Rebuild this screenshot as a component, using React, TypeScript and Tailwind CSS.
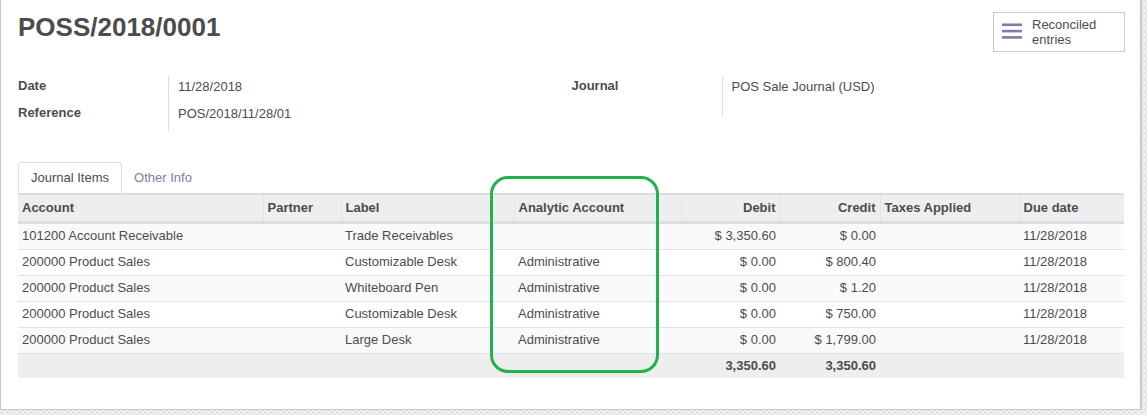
import React from 'react';

type Line = {
  account: string;
  label: string;
  analytic: string;
  debit: string;
  credit: string;
  due: string;
};

const lines: Line[] = [
  { account: '101200 Account Receivable', label: 'Trade Receivables', analytic: '', debit: '$ 3,350.60', credit: '$ 0.00', due: '11/28/2018' },
  { account: '200000 Product Sales', label: 'Customizable Desk', analytic: 'Administrative', debit: '$ 0.00', credit: '$ 800.40', due: '11/28/2018' },
  { account: '200000 Product Sales', label: 'Whiteboard Pen', analytic: 'Administrative', debit: '$ 0.00', credit: '$ 1.20', due: '11/28/2018' },
  { account: '200000 Product Sales', label: 'Customizable Desk', analytic: 'Administrative', debit: '$ 0.00', credit: '$ 750.00', due: '11/28/2018' },
  { account: '200000 Product Sales', label: 'Large Desk', analytic: 'Administrative', debit: '$ 0.00', credit: '$ 1,799.00', due: '11/28/2018' },
];

const BarsIcon = () => (
  <svg width="20" height="16" viewBox="0 0 20 16" className="shrink-0 mt-[6px]">
    <rect x="0" y="0.5" width="20" height="2.6" fill="#7c7bad" />
    <rect x="0" y="6.8" width="20" height="2.6" fill="#7c7bad" />
    <rect x="0" y="13.1" width="20" height="2.6" fill="#7c7bad" />
  </svg>
);

export default function App() {
  return (
    <div className="w-[1147px] h-[415px] overflow-hidden bg-[repeating-conic-gradient(#e4e4e4_0_25%,#f1f1f1_0_50%)] bg-[length:6px_6px] font-['Liberation_Sans',Arial,sans-serif] text-[13px] text-[#4c4c4c]">
      <div className="relative w-[1142px] h-[410px] bg-white border-l border-b border-r-2 border-[#c9c9cd] pl-[17px] pr-[15px] pt-[12px]">
        {/* Title + button */}
        <div className="flex justify-between items-start">
          <h1 className="text-[26px] leading-[30px] font-bold text-[#4c4c4c]">POSS/2018/0001</h1>
          <button className="w-[132px] h-[40px] border border-[#cccccc] bg-white flex items-start gap-[10px] pl-[8px] pt-[4px] text-left leading-[15px] text-[#4c4c4c]">
            <BarsIcon />
            <span>
              Reconciled
              <br />
              entries
            </span>
          </button>
        </div>

        {/* Fields */}
        <div className="grid grid-cols-2 mt-[24px]">
          <div className="flex">
            <div className="w-[150px] font-bold">
              <div className="h-[27px] leading-[20px]">Date</div>
              <div className="h-[28px] leading-[20px]">Reference</div>
            </div>
            <div className="border-l border-[#dddddd] pl-[9px]">
              <div className="h-[27px] leading-[20px] pt-px">11/28/2018</div>
              <div className="h-[28px] leading-[20px] pt-px">POS/2018/11/28/01</div>
            </div>
          </div>
          <div className="flex">
            <div className="w-[150px] font-bold leading-[20px]">Journal</div>
            <div className="border-l border-[#dddddd] pl-[9px] h-[39px] leading-[20px] pt-px">POS Sale Journal (USD)</div>
          </div>
        </div>

        {/* Tabs */}
        <div className="flex mt-[31px] h-[31px]">
          <div className="px-3 pt-[5px] border border-b-0 border-[#dddddd] rounded-t-[3px] bg-white leading-[20px]">Journal Items</div>
          <div className="px-3 pt-[6px] leading-[20px] text-[#7c7bad]">Other Info</div>
        </div>

        {/* Lines */}
        <table className="w-[1106px] table-fixed border-collapse">
          <colgroup>
            <col className="w-[245px]" />
            <col className="w-[78px]" />
            <col className="w-[173px]" />
            <col className="w-[167px]" />
            <col className="w-[99px]" />
            <col className="w-[100px]" />
            <col className="w-[139px]" />
            <col className="w-[105px]" />
          </colgroup>
          <thead>
            <tr className="bg-[#eeeeee] border-t-2 border-b-[3px] border-[#dcdde2] h-[28px] font-bold">
              <th className="px-1 text-left font-bold">Account</th>
              <th className="px-1 text-left font-bold border-l border-[#e3e3e3]">Partner</th>
              <th className="px-1 text-left font-bold border-l border-[#e3e3e3]">Label</th>
              <th className="px-1 text-left font-bold border-l border-[#e3e3e3]">Analytic Account</th>
              <th className="px-1 text-right font-bold border-l border-[#e3e3e3]">Debit</th>
              <th className="px-1 text-right font-bold border-l border-[#e3e3e3]">Credit</th>
              <th className="px-1 text-left font-bold border-l border-[#e3e3e3]">Taxes Applied</th>
              <th className="px-1 text-left font-bold border-l border-[#e3e3e3]">Due date</th>
            </tr>
          </thead>
          <tbody>
            {lines.map((l, i) => (
              <tr key={i} className={`${i === 0 ? 'h-[27px]' : 'h-[26px]'} border-b border-[#e1e1e6] ${i % 2 === 0 ? 'bg-[#fafafa]' : 'bg-white'}`}>
                <td className="px-1">{l.account}</td>
                <td className="px-1 pl-[5px]"></td>
                <td className="px-1">{l.label}</td>
                <td className="px-1">{l.analytic}</td>
                <td className="px-1 text-right">{l.debit}</td>
                <td className="px-1 text-right">{l.credit}</td>
                <td className="px-1"></td>
                <td className="px-1">{l.due}</td>
              </tr>
            ))}
          </tbody>
          <tfoot>
            <tr className="h-[25px] bg-[#eeeeee] font-bold">
              <td colSpan={4}></td>
              <td className="px-1 text-right">3,350.60</td>
              <td className="px-1 text-right">3,350.60</td>
              <td colSpan={2}></td>
            </tr>
          </tfoot>
        </table>

        {/* Annotation */}
        <div className="absolute left-[489px] top-[176px] w-[169px] h-[197px] border-[3px] border-[#22b14c] rounded-[18px]"></div>
      </div>
    </div>
  );
}
